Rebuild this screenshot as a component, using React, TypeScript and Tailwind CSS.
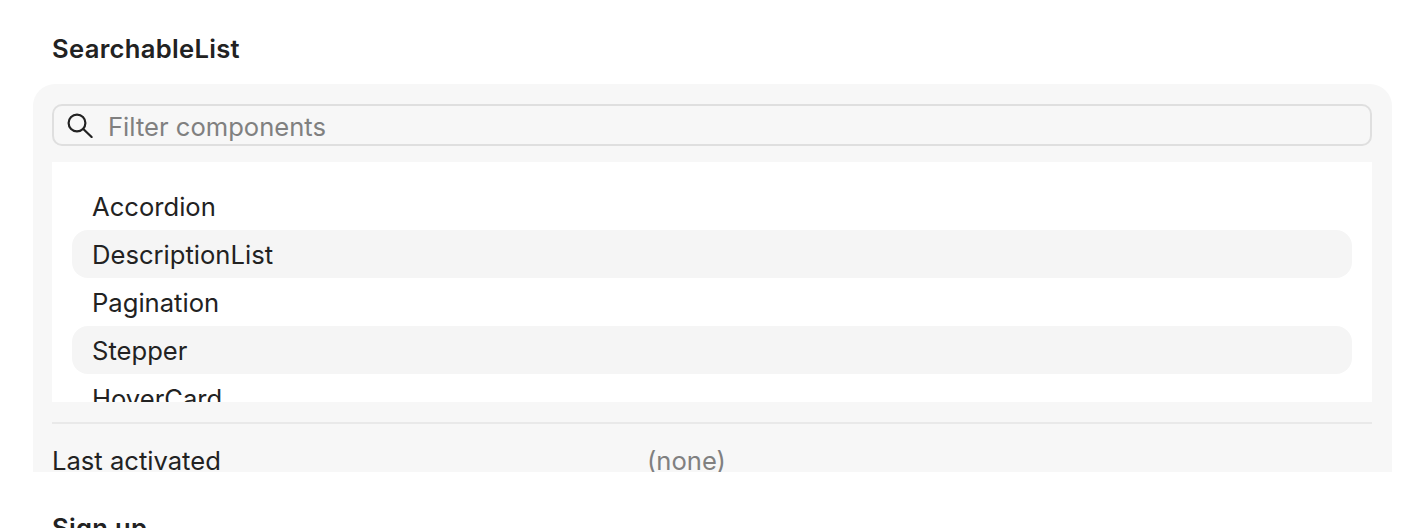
const items = ['Accordion', 'DescriptionList', 'Pagination', 'Stepper', 'HoverCard'];

export default function App() {
  return (
    <div className="h-[528px] w-[1424px] overflow-hidden bg-white font-['Inter',sans-serif] text-[25.6px] text-[#222222]">
      <h2 className="ml-[52px] pt-[33px] text-[25.6px] font-semibold leading-[32px] tracking-[0.3px]">SearchableList</h2>

      <div className="ml-[33px] mr-[32px] mt-[19px] h-[388px] overflow-hidden rounded-t-[22px] bg-[#f7f7f7] pl-[19px] pr-[20px] pt-[20px]">
        <div className="flex h-[42px] items-center gap-[15px] rounded-[10px] border-2 border-[#dfdfdf] pl-[13px]">
          <svg width="26" height="25" viewBox="0 0 26 25" fill="none" stroke="#222222" strokeWidth="2.2" strokeLinecap="round">
            <circle cx="10" cy="10" r="8.4" />
            <path d="M16.3 16l8.3 8" />
          </svg>
          <span className="pt-[5px] text-[#808080]">Filter components</span>
        </div>

        <div className="mt-[16px] h-[240px] overflow-hidden bg-white px-[20px] pt-[20px]">
          {items.map((name, i) => (
            <div
              key={name}
              className={`flex h-[48px] items-center rounded-[16px] px-[20px] pt-[2px] ${i % 2 === 1 ? 'bg-[#f5f5f5]' : ''}`}
            >
              {name}
            </div>
          ))}
        </div>

        <div className="mt-[20px] h-[2px] bg-[#e9e9e9]" />

        <div className="flex h-[48px] items-center pt-[26px]">
          <span className="w-[595px]">Last activated</span>
          <span className="text-[#808080]">(none)</span>
        </div>
      </div>

      <h2 className="ml-[52px] mt-[40px] text-[25.6px] font-semibold leading-[32px] tracking-[0.3px]">Sign up</h2>
    </div>
  );
}
